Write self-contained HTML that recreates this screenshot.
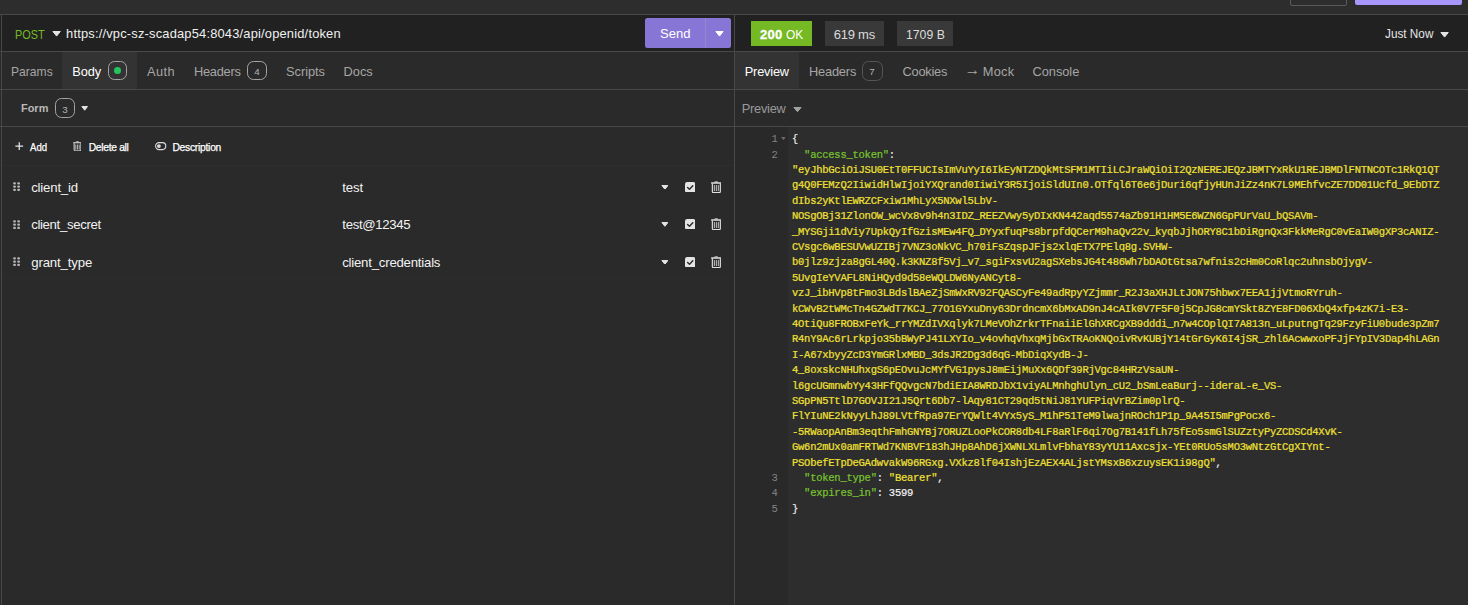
<!DOCTYPE html>
<html lang="en"><head><meta charset="utf-8"><title>Insomnia</title>
<style>
*{box-sizing:border-box;margin:0;padding:0}
html,body{width:1468px;height:605px;overflow:hidden;background:#2a2a2a}
body{position:relative;font-family:'Liberation Sans', sans-serif;-webkit-font-smoothing:antialiased}
.a{position:absolute;display:block}
.t{position:absolute;white-space:pre;line-height:1;font-family:'Liberation Sans', sans-serif}
#add,#delall,#desc{-webkit-text-stroke:0.25px #fff}
#s200{-webkit-text-stroke:0.3px #fff}
.arr{font-size:1.22em;line-height:0;position:relative;top:-1.1px;margin-right:-1.4px}
.gut,.code{position:absolute;left:0;top:0;font-family:'Liberation Mono', monospace;font-size:10.5px;letter-spacing:-0.2510px;line-height:15.4px}
.gut{color:#848484} .code{color:#f1e034;-webkit-text-stroke:0.22px #f1e034}
.ln{position:absolute;left:734.2px;width:43.251px;height:15.4px;text-align:right;white-space:pre}
.cl{position:absolute;left:792px;height:15.4px;white-space:pre}
.k{color:#78c42e;-webkit-text-stroke:0.22px #78c42e} .p{color:#ececec;-webkit-text-stroke:0.2px #ececec} .n{color:#f4f4f4;-webkit-text-stroke:0.2px #f4f4f4}
.badge{position:absolute;border:1px solid #a4a4a4;border-radius:6.5px}
</style></head><body>
<!-- top strip -->
<div class="a" style="left:0;top:0;width:1468px;height:14px;background:#2d2d2d"></div>
<div class="a" style="left:1290px;top:-6.3px;width:57px;height:12px;border:1px solid #5a5a5a;border-radius:2px"></div>
<div class="a" style="left:1355px;top:-7px;width:107px;height:12.1px;background:#a896fb;border-radius:2px"></div>
<div class="a" style="left:0;top:14px;width:1468px;height:1px;background:#484848"></div>
<!-- url / status bar -->
<div class="a" style="left:0;top:15px;width:1468px;height:36px;background:#212121"></div>
<div class="a" style="left:0;top:51px;width:1468px;height:1px;background:#484848"></div>
<!-- tab rows -->
<div class="a" style="left:0;top:52px;width:1468px;height:37px;background:#2a2a2a"></div>
<div class="a" style="left:62px;top:52px;width:75px;height:37px;background:#333333"></div>
<div class="a" style="left:735px;top:52px;width:64px;height:37px;background:#333333"></div>
<div class="a" style="left:0;top:89px;width:1468px;height:1px;background:#484848"></div>
<div class="a" style="left:0;top:126px;width:1468px;height:1px;background:#484848"></div>
<!-- left rows subtle -->
<div class="a" style="left:2px;top:165px;width:732px;height:1px;background:#2e2e2e"></div>
<div class="a" style="left:2px;top:279px;width:732px;height:1px;background:#2c2c2c"></div>
<!-- code area -->
<div class="a" style="left:735px;top:127px;width:53px;height:478px;background:#292929"></div>
<div class="a" style="left:788px;top:127px;width:680px;height:478px;background:#2d2d2d"></div>
<!-- vertical dividers -->
<div class="a" style="left:1px;top:15px;width:1px;height:590px;background:#484848"></div>
<div class="a" style="left:734px;top:15px;width:1px;height:590px;background:#484848"></div>
<!-- send button -->
<div class="a" style="left:645px;top:18px;width:86px;height:30px;background:#8776d5;border-radius:2.5px"></div>
<div class="a" style="left:705px;top:18px;width:1px;height:30px;background:#9487cc"></div>
<svg class="a" style="left:714.9px;top:31.3px" width="9" height="5.6" viewBox="0 0 9 5.6"><path d="M0.9 0.5H8.1L4.5 5.1Z" fill="#ffffff" stroke="#ffffff" stroke-width="1" stroke-linejoin="round"/></svg>
<svg class="a" style="left:52.0px;top:31.0px" width="9.2" height="5.6" viewBox="0 0 9.2 5.6"><path d="M0.9 0.5H8.299999999999999L4.6 5.1Z" fill="#e4e4e4" stroke="#e4e4e4" stroke-width="1" stroke-linejoin="round"/></svg>
<!-- status tags -->
<div class="a" style="left:751px;top:21px;width:61px;height:25px;background:#75ba24"></div>
<div class="a" style="left:825px;top:21px;width:59px;height:25px;background:#393939"></div>
<div class="a" style="left:897px;top:21px;width:56px;height:25px;background:#393939"></div>
<svg class="a" style="left:1439.8px;top:32.0px" width="9.2" height="5.6" viewBox="0 0 9.2 5.6"><path d="M0.9 0.5H8.299999999999999L4.6 5.1Z" fill="#e4e4e4" stroke="#e4e4e4" stroke-width="1" stroke-linejoin="round"/></svg>
<!-- badges -->
<div class="badge" style="left:108px;top:61px;width:19px;height:19px"></div>
<div class="a" style="left:113.9px;top:66.8px;width:7.2px;height:7.2px;border-radius:50%;background:#22c55e"></div>
<div class="badge" style="left:247px;top:61px;width:20px;height:19px"></div>
<div class="badge" style="left:55px;top:98px;width:20px;height:20px"></div>
<div class="badge" style="left:862px;top:61px;width:21px;height:20px;border-color:#555"></div>
<svg class="a" style="left:80.9px;top:105.9px" width="7.4" height="4.7" viewBox="0 0 7.4 4.7"><path d="M0.9 0.5H6.5L3.7 4.2Z" fill="#e4e4e4" stroke="#e4e4e4" stroke-width="1" stroke-linejoin="round"/></svg>
<svg class="a" style="left:792.8px;top:106.6px" width="9" height="5.2" viewBox="0 0 9 5.2"><path d="M0.9 0.5H8.1L4.5 4.7Z" fill="#a2a2a2" stroke="#a2a2a2" stroke-width="1" stroke-linejoin="round"/></svg>
<!-- action row icons -->
<svg class="a" style="left:15px;top:142px" width="9" height="9" viewBox="0 0 9 9"><path d="M4.25 0.3V7.9M0.4 4.1H8.1" stroke="#e6e6e6" stroke-width="1.25" fill="none"/></svg>
<svg class="a" style="left:72.7px;top:140.7px" width="8.8" height="10.5" viewBox="0 0 10.4 12.2"><path d="M3.1 1.5L3.6 0.6Q3.8 0.25 4.2 0.25H6.2Q6.6 0.25 6.8 0.6L7.3 1.5Z" fill="#e8e8e8" opacity="0.8"/><rect x="0" y="1.35" width="10.4" height="1.3" rx="0.6" fill="#e8e8e8"/><path d="M1.35 2.6V10.5Q1.35 11.6 2.45 11.6H8.25Q9.35 11.6 9.35 10.5V2.6" fill="none" stroke="#e8e8e8" stroke-width="1.15"/><path d="M3.35 4.1V10.1M5.35 4.1V10.1M7.35 4.1V10.1" stroke="#e8e8e8" stroke-width="0.95" fill="none" opacity="0.9"/></svg>
<svg class="a" style="left:155px;top:142px" width="11.5" height="8.5" viewBox="0 0 11.5 8.5"><rect x="0.6" y="0.6" width="10.2" height="7" rx="3.5" fill="none" stroke="#dcdcdc" stroke-width="1.1"/><circle cx="3.9" cy="4.1" r="1.9" fill="#dcdcdc"/></svg>
<svg class="a" style="left:12.9px;top:182.4px" width="7.2" height="9.2" viewBox="0 0 7.2 9.2"><rect x="0.15" y="0.20" width="2.8" height="2.3" rx="1" fill="#b4b4b4"/><rect x="4.20" y="0.20" width="2.8" height="2.3" rx="1" fill="#b4b4b4"/><rect x="0.15" y="3.50" width="2.8" height="2.3" rx="1" fill="#b4b4b4"/><rect x="4.20" y="3.50" width="2.8" height="2.3" rx="1" fill="#b4b4b4"/><rect x="0.15" y="6.80" width="2.8" height="2.3" rx="1" fill="#b4b4b4"/><rect x="4.20" y="6.80" width="2.8" height="2.3" rx="1" fill="#b4b4b4"/></svg><svg class="a" style="left:660.6px;top:184.7px" width="7.8" height="4.8" viewBox="0 0 7.8 4.8"><path d="M0.9 0.5H6.8999999999999995L3.9 4.3Z" fill="#e4e4e4" stroke="#e4e4e4" stroke-width="1" stroke-linejoin="round"/></svg><svg class="a" style="left:684.85px;top:181.5px" width="10.4" height="10.6" viewBox="0 0 10.4 10.6"><rect x="0" y="0" width="10.4" height="10.6" rx="2.2" fill="#e4e4e4"/><path d="M2.6 5.5L4.5 7.3L7.8 3.7" fill="none" stroke="#2c2c2c" stroke-width="1.45" stroke-linecap="round" stroke-linejoin="round"/></svg><svg class="a" style="left:710.9px;top:180.9px" width="10.4" height="12.2" viewBox="0 0 10.4 12.2"><path d="M3.1 1.5L3.6 0.6Q3.8 0.25 4.2 0.25H6.2Q6.6 0.25 6.8 0.6L7.3 1.5Z" fill="#e0e0e0" opacity="0.8"/><rect x="0" y="1.35" width="10.4" height="1.3" rx="0.6" fill="#e0e0e0"/><path d="M1.35 2.6V10.5Q1.35 11.6 2.45 11.6H8.25Q9.35 11.6 9.35 10.5V2.6" fill="none" stroke="#e0e0e0" stroke-width="1.15"/><path d="M3.35 4.1V10.1M5.35 4.1V10.1M7.35 4.1V10.1" stroke="#e0e0e0" stroke-width="0.95" fill="none" opacity="0.9"/></svg><svg class="a" style="left:12.9px;top:219.8px" width="7.2" height="9.2" viewBox="0 0 7.2 9.2"><rect x="0.15" y="0.20" width="2.8" height="2.3" rx="1" fill="#b4b4b4"/><rect x="4.20" y="0.20" width="2.8" height="2.3" rx="1" fill="#b4b4b4"/><rect x="0.15" y="3.50" width="2.8" height="2.3" rx="1" fill="#b4b4b4"/><rect x="4.20" y="3.50" width="2.8" height="2.3" rx="1" fill="#b4b4b4"/><rect x="0.15" y="6.80" width="2.8" height="2.3" rx="1" fill="#b4b4b4"/><rect x="4.20" y="6.80" width="2.8" height="2.3" rx="1" fill="#b4b4b4"/></svg><svg class="a" style="left:660.6px;top:222.1px" width="7.8" height="4.8" viewBox="0 0 7.8 4.8"><path d="M0.9 0.5H6.8999999999999995L3.9 4.3Z" fill="#e4e4e4" stroke="#e4e4e4" stroke-width="1" stroke-linejoin="round"/></svg><svg class="a" style="left:684.85px;top:218.9px" width="10.4" height="10.6" viewBox="0 0 10.4 10.6"><rect x="0" y="0" width="10.4" height="10.6" rx="2.2" fill="#e4e4e4"/><path d="M2.6 5.5L4.5 7.3L7.8 3.7" fill="none" stroke="#2c2c2c" stroke-width="1.45" stroke-linecap="round" stroke-linejoin="round"/></svg><svg class="a" style="left:710.9px;top:218.3px" width="10.4" height="12.2" viewBox="0 0 10.4 12.2"><path d="M3.1 1.5L3.6 0.6Q3.8 0.25 4.2 0.25H6.2Q6.6 0.25 6.8 0.6L7.3 1.5Z" fill="#e0e0e0" opacity="0.8"/><rect x="0" y="1.35" width="10.4" height="1.3" rx="0.6" fill="#e0e0e0"/><path d="M1.35 2.6V10.5Q1.35 11.6 2.45 11.6H8.25Q9.35 11.6 9.35 10.5V2.6" fill="none" stroke="#e0e0e0" stroke-width="1.15"/><path d="M3.35 4.1V10.1M5.35 4.1V10.1M7.35 4.1V10.1" stroke="#e0e0e0" stroke-width="0.95" fill="none" opacity="0.9"/></svg><svg class="a" style="left:12.9px;top:257.4px" width="7.2" height="9.2" viewBox="0 0 7.2 9.2"><rect x="0.15" y="0.20" width="2.8" height="2.3" rx="1" fill="#b4b4b4"/><rect x="4.20" y="0.20" width="2.8" height="2.3" rx="1" fill="#b4b4b4"/><rect x="0.15" y="3.50" width="2.8" height="2.3" rx="1" fill="#b4b4b4"/><rect x="4.20" y="3.50" width="2.8" height="2.3" rx="1" fill="#b4b4b4"/><rect x="0.15" y="6.80" width="2.8" height="2.3" rx="1" fill="#b4b4b4"/><rect x="4.20" y="6.80" width="2.8" height="2.3" rx="1" fill="#b4b4b4"/></svg><svg class="a" style="left:660.6px;top:259.7px" width="7.8" height="4.8" viewBox="0 0 7.8 4.8"><path d="M0.9 0.5H6.8999999999999995L3.9 4.3Z" fill="#e4e4e4" stroke="#e4e4e4" stroke-width="1" stroke-linejoin="round"/></svg><svg class="a" style="left:684.85px;top:256.5px" width="10.4" height="10.6" viewBox="0 0 10.4 10.6"><rect x="0" y="0" width="10.4" height="10.6" rx="2.2" fill="#e4e4e4"/><path d="M2.6 5.5L4.5 7.3L7.8 3.7" fill="none" stroke="#2c2c2c" stroke-width="1.45" stroke-linecap="round" stroke-linejoin="round"/></svg><svg class="a" style="left:710.9px;top:255.9px" width="10.4" height="12.2" viewBox="0 0 10.4 12.2"><path d="M3.1 1.5L3.6 0.6Q3.8 0.25 4.2 0.25H6.2Q6.6 0.25 6.8 0.6L7.3 1.5Z" fill="#e0e0e0" opacity="0.8"/><rect x="0" y="1.35" width="10.4" height="1.3" rx="0.6" fill="#e0e0e0"/><path d="M1.35 2.6V10.5Q1.35 11.6 2.45 11.6H8.25Q9.35 11.6 9.35 10.5V2.6" fill="none" stroke="#e0e0e0" stroke-width="1.15"/><path d="M3.35 4.1V10.1M5.35 4.1V10.1M7.35 4.1V10.1" stroke="#e0e0e0" stroke-width="0.95" fill="none" opacity="0.9"/></svg>
<!-- fold marker -->
<svg class="a" style="left:781.2px;top:137.2px" width="4.8" height="3" viewBox="0 0 4.8 3"><path d="M0.9 0.5H3.9L2.4 2.5Z" fill="#6e6e6e" stroke="#6e6e6e" stroke-width="1" stroke-linejoin="round"/></svg>
<!-- text -->
<span id="post" class="t" style="left:15.26px;top:29.00px;font-size:12.4px;color:#75ba24;font-weight:400;letter-spacing:0.000px;transform:scaleX(0.8778);transform-origin:0 0">POST</span>
<span id="url" class="t" style="left:66.10px;top:28.00px;font-size:12.9px;color:#f0f0f0;font-weight:400;letter-spacing:0.181px">https://vpc-sz-scadap54:8043/api/openid/token</span>
<span id="send" class="t" style="left:659.96px;top:27.01px;font-size:13.7px;color:#ffffff;font-weight:400;letter-spacing:0.000px;transform:scaleX(0.9523);transform-origin:0 0">Send</span>
<span id="params" class="t" style="left:11.47px;top:66.01px;font-size:12.8px;color:#a6a6a6;font-weight:400;letter-spacing:0.000px;transform:scaleX(0.9455);transform-origin:0 0">Params</span>
<span id="body" class="t" style="left:72.33px;top:66.01px;font-size:12.8px;color:#ffffff;font-weight:400;letter-spacing:-0.117px">Body</span>
<span id="auth" class="t" style="left:147.00px;top:66.01px;font-size:12.8px;color:#a6a6a6;font-weight:400;letter-spacing:0.401px">Auth</span>
<span id="headers" class="t" style="left:193.92px;top:66.01px;font-size:12.8px;color:#a6a6a6;font-weight:400;letter-spacing:-0.242px">Headers</span>
<span id="b4" class="t" style="left:254.36px;top:67.00px;font-size:9.8px;color:#b4b4b4;font-weight:400;letter-spacing:0.000px">4</span>
<span id="scripts" class="t" style="left:286.09px;top:66.01px;font-size:12.8px;color:#a6a6a6;font-weight:400;letter-spacing:-0.042px">Scripts</span>
<span id="docs" class="t" style="left:343.56px;top:66.01px;font-size:12.8px;color:#a6a6a6;font-weight:400;letter-spacing:-0.004px">Docs</span>
<span id="form" class="t" style="left:21.04px;top:103.00px;font-size:11.5px;color:#b8b8b8;font-weight:700;letter-spacing:0.000px;transform:scaleX(0.9515);transform-origin:0 0">Form</span>
<span id="b3" class="t" style="left:62.32px;top:105.00px;font-size:9.8px;color:#b4b4b4;font-weight:400;letter-spacing:0.000px">3</span>
<span id="add" class="t" style="left:30.34px;top:143.00px;font-size:10.3px;color:#ffffff;font-weight:400;letter-spacing:0.000px;transform:scaleX(0.9310);transform-origin:0 0">Add</span>
<span id="delall" class="t" style="left:88.69px;top:143.00px;font-size:10.3px;color:#ffffff;font-weight:400;letter-spacing:-0.307px">Delete all</span>
<span id="desc" class="t" style="left:172.45px;top:143.00px;font-size:10.3px;color:#ffffff;font-weight:400;letter-spacing:-0.261px">Description</span>
<span id="k1" class="t" style="left:31.20px;top:181.00px;font-size:13.2px;color:#f2f2f2;font-weight:400;letter-spacing:-0.186px">client_id</span>
<span id="k2" class="t" style="left:31.20px;top:218.00px;font-size:13.2px;color:#f2f2f2;font-weight:400;letter-spacing:-0.341px">client_secret</span>
<span id="k3" class="t" style="left:31.23px;top:256.00px;font-size:13.2px;color:#f2f2f2;font-weight:400;letter-spacing:-0.143px">grant_type</span>
<span id="v1" class="t" style="left:342.34px;top:181.00px;font-size:13.2px;color:#f2f2f2;font-weight:400;letter-spacing:-0.165px">test</span>
<span id="v2" class="t" style="left:342.34px;top:218.00px;font-size:13.2px;color:#f2f2f2;font-weight:400;letter-spacing:-0.333px">test@12345</span>
<span id="v3" class="t" style="left:342.20px;top:256.00px;font-size:13.2px;color:#f2f2f2;font-weight:400;letter-spacing:-0.213px">client_credentials</span>
<span id="s200" class="t" style="left:760.08px;top:28.00px;font-size:13px;color:#ffffff;font-weight:700;letter-spacing:0.251px">200</span>
<span id="sok" class="t" style="left:786.28px;top:28.00px;font-size:13px;color:#ffffff;font-weight:400;letter-spacing:0.000px;transform:scaleX(0.9175);transform-origin:0 0">OK</span>
<span id="ms" class="t" style="left:833.80px;top:28.00px;font-size:13px;color:#dcdcdc;font-weight:400;letter-spacing:-0.246px">619 ms</span>
<span id="sz" class="t" style="left:905.80px;top:28.00px;font-size:13px;color:#dcdcdc;font-weight:400;letter-spacing:0.000px;transform:scaleX(0.9414);transform-origin:0 0">1709 B</span>
<span id="now" class="t" style="left:1385.11px;top:28.01px;font-size:12.8px;color:#e6e6e6;font-weight:400;letter-spacing:0.000px;transform:scaleX(0.9193);transform-origin:0 0">Just Now</span>
<span id="rprev" class="t" style="left:744.80px;top:66.01px;font-size:12.8px;color:#ffffff;font-weight:400;letter-spacing:-0.213px">Preview</span>
<span id="rhead" class="t" style="left:808.92px;top:66.01px;font-size:12.8px;color:#a6a6a6;font-weight:400;letter-spacing:-0.163px">Headers</span>
<span id="b7" class="t" style="left:869.20px;top:67.00px;font-size:9.8px;color:#b4b4b4;font-weight:400;letter-spacing:0.000px">7</span>
<span id="cookies" class="t" style="left:902.50px;top:66.01px;font-size:12.8px;color:#a6a6a6;font-weight:400;letter-spacing:-0.234px">Cookies</span>
<span id="mock" class="t" style="left:964.56px;top:66.01px;font-size:12.8px;color:#a6a6a6;font-weight:400;letter-spacing:0.227px"><span class="arr">→</span> Mock</span>
<span id="console" class="t" style="left:1032.60px;top:66.01px;font-size:12.8px;color:#a6a6a6;font-weight:400;letter-spacing:-0.050px">Console</span>
<span id="pv" class="t" style="left:741.82px;top:103.01px;font-size:12.8px;color:#9a9a9a;font-weight:400;letter-spacing:-0.268px">Preview</span>
<div class="gut"><div class="ln" style="top:132px">1</div><div class="ln" style="top:148px">2</div><div class="ln" style="top:471px">3</div><div class="ln" style="top:486px">4</div><div class="ln" style="top:502px">5</div></div>
<div class="code">
<div class="cl" style="top:132px"><span class="p">{</span></div>
<div class="cl" style="top:148px">  <span class="k">"access_token"</span><span class="p">:</span></div>
<div class="cl" style="top:163px">"eyJhbGciOiJSU0EtT0FFUCIsImVuYyI6IkEyNTZDQkMtSFM1MTIiLCJraWQiOiI2QzNEREJEQzJBMTYxRkU1REJBMDlFNTNCOTc1RkQ1QT</div>
<div class="cl" style="top:178px">g4Q0FEMzQ2IiwidHlwIjoiYXQrand0IiwiY3R5IjoiSldUIn0.OTfql6T6e6jDuri6qfjyHUnJiZz4nK7L9MEhfvcZE7DD01Ucfd_9EbDTZ</div>
<div class="cl" style="top:194px">dIbs2yKtlEWRZCFxiw1MhLyX5NXwl5LbV-</div>
<div class="cl" style="top:209px">NOSgOBj31ZlonOW_wcVx8v9h4n3IDZ_REEZVwy5yDIxKN442aqd5574aZb91H1HM5E6WZN6GpPUrVaU_bQSAVm-</div>
<div class="cl" style="top:225px">_MYSGji1dViy7UpkQyIfGzisMEw4FQ_DYyxfuqPs8brpfdQCerM9haQv22v_kyqbJjhORY8C1bDiRgnQx3FkkMeRgC0vEaIW0gXP3cANIZ-</div>
<div class="cl" style="top:240px">CVsgc6wBESUVwUZIBj7VNZ3oNkVC_h70iFsZqspJFjs2xlqETX7PElq8g.SVHW-</div>
<div class="cl" style="top:255px">b0jlz9zjza8gGL40Q.k3KNZ8f5Vj_v7_sgiFxsvU2agSXebsJG4t486Wh7bDAOtGtsa7wfnis2cHm0CoRlqc2uhnsbOjygV-</div>
<div class="cl" style="top:271px">5UvgIeYVAFL8NiHQyd9d58eWQLDW6NyANCyt8-</div>
<div class="cl" style="top:286px">vzJ_ibHVp8tFmo3LBdslBAeZjSmWxRV92FQASCyFe49adRpyYZjmmr_R2J3aXHJLtJON75hbwx7EEA1jjVtmoRYruh-</div>
<div class="cl" style="top:302px">kCWvB2tWMcTn4GZWdT7KCJ_77O1GYxuDny63DrdncmX6bMxAD9nJ4cAIk0V7F5F0j5CpJG8cmYSkt8ZYE8FD06XbQ4xfp4zK7i-E3-</div>
<div class="cl" style="top:317px">4OtiQu8FROBxFeYk_rrYMZdIVXqlyk7LMeVOhZrkrTFnaiiElGhXRCgXB9dddi_n7w4COplQI7A813n_uLputngTq29FzyFiU0bude3pZm7</div>
<div class="cl" style="top:332px">R4nY9Ac6rLrkpjo35bBWyPJ41LXYIo_v4ovhqVhxqMjbGxTRAoKNQoivRvKUBjY14tGrGyK6I4jSR_zhl6AcwwxoPFJjFYpIV3Dap4hLAGn</div>
<div class="cl" style="top:348px">I-A67xbyyZcD3YmGRlxMBD_3dsJR2Dg3d6qG-MbDiqXydB-J-</div>
<div class="cl" style="top:363px">4_8oxskcNHUhxgS6pEOvuJcMYfVG1pysJ8mEijMuXx6QDf39RjVgc84HRzVsaUN-</div>
<div class="cl" style="top:379px">l6gcUGmnwbYy43HFfQQvgcN7bdiEIA8WRDJbX1viyALMnhghUlyn_cU2_bSmLeaBurj--ideraL-e_VS-</div>
<div class="cl" style="top:394px">SGpPN5TtlD7GOVJI21J5Qrt6Db7-lAqy81CT29qd5tNiJ81YUFPiqVrBZim0plrQ-</div>
<div class="cl" style="top:409px">FlYIuNE2kNyyLhJ89LVtfRpa97ErYQWlt4VYx5yS_M1hP51TeM9lwajnROch1P1p_9A45I5mPgPocx6-</div>
<div class="cl" style="top:425px">-5RWaopAnBm3eqthFmhGNYBj7ORUZLooPkCOR8db4LF8aRlF6qi7Og7B141fLh75fEo5smGlSUZztyPyZCDSCd4XvK-</div>
<div class="cl" style="top:440px">Gw6n2mUx0amFRTWd7KNBVF183hJHp8AhD6jXWNLXLmlvFbhaY83yYU11Axcsjx-YEt0RUo5sMO3wNtzGtCgXIYnt-</div>
<div class="cl" style="top:456px">PSObefETpDeGAdwvakW96RGxg.VXkz8lf04IshjEzAEX4ALjstYMsxB6xzuysEK1i98gQ"<span class="p">,</span></div>
<div class="cl" style="top:471px">  <span class="k">"token_type"</span><span class="p">:</span> "Bearer"<span class="p">,</span></div>
<div class="cl" style="top:486px">  <span class="k">"expires_in"</span><span class="p">:</span> <span class="n">3599</span></div>
<div class="cl" style="top:502px"><span class="p">}</span></div>
</div>
</body></html>
